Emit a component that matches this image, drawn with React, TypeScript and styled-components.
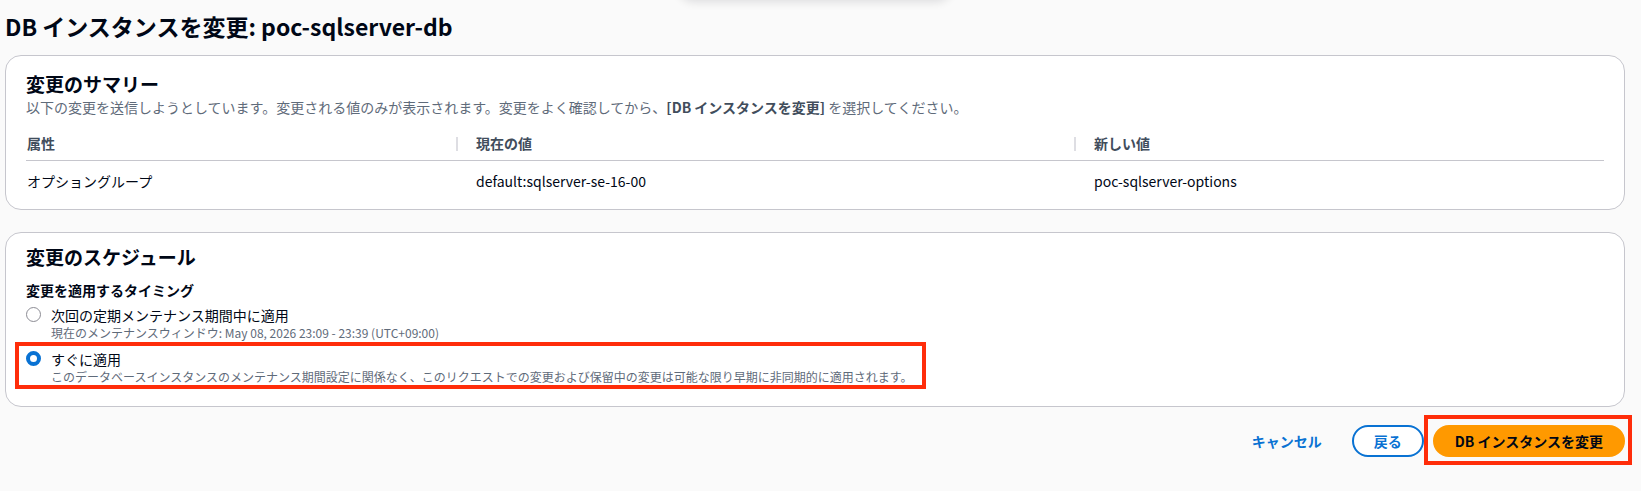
import styled, { createGlobalStyle } from 'styled-components';

const GlobalStyle = createGlobalStyle`
  body {
    margin: 0;
    background: #fafafa;
    font-family: "Noto Sans CJK JP", "Noto Sans", sans-serif;
    color: #000716;
  }
`;

const App = () => {
  return (
    <>
      <GlobalStyle />
      <StyledPage>
        <TopShadow />
        <PageTitle>DB インスタンスを変更: poc-sqlserver-db</PageTitle>

        <Card $padTop={16} $padBottom={8}>
          <CardTitle>変更のサマリー</CardTitle>
          <Description>
            以下の変更を送信しようとしています。変更される値のみが表示されます。変更をよく確認してから、
            <b>[DB インスタンスを変更]</b> を選択してください。
          </Description>
          <Table>
            <HeadCell>属性</HeadCell>
            <HeadCell $divider>現在の値</HeadCell>
            <HeadCell $divider>新しい値</HeadCell>
            <Cell>オプショングループ</Cell>
            <Cell $indent>default:sqlserver-se-16-00</Cell>
            <Cell $indent>poc-sqlserver-options</Cell>
          </Table>
        </Card>

        <Card $padTop={12} $padBottom={21} $gapAfter={18}>
          <CardTitle>変更のスケジュール</CardTitle>
          <FieldLabel>変更を適用するタイミング</FieldLabel>
          <RadioGroup>
            <RadioItem>
              <Radio />
              <RadioText>
                <RadioLabel>次回の定期メンテナンス期間中に適用</RadioLabel>
                <RadioHint>現在のメンテナンスウィンドウ: May 08, 2026 23:09 - 23:39 (UTC+09:00)</RadioHint>
              </RadioText>
            </RadioItem>
            <RadioItem $marked>
              <Radio $checked />
              <RadioText>
                <RadioLabel>すぐに適用</RadioLabel>
                <RadioHint>
                  このデータベースインスタンスのメンテナンス期間設定に関係なく、このリクエストでの変更および保留中の変更は可能な限り早期に非同期的に適用されます。
                </RadioHint>
              </RadioText>
            </RadioItem>
          </RadioGroup>
        </Card>

        <Actions>
          <LinkButton>キャンセル</LinkButton>
          <NormalButton>戻る</NormalButton>
          <Marked>
            <PrimaryButton>DB インスタンスを変更</PrimaryButton>
          </Marked>
        </Actions>
      </StyledPage>
    </>
  );
};

const StyledPage = styled.div`
  position: relative;
  padding: 11px 16px 20px 5px;
  display: flex;
  flex-direction: column;
`;

const TopShadow = styled.div`
  position: absolute;
  top: -40px;
  left: 678px;
  width: 274px;
  height: 40px;
  border-radius: 16px;
  background: #fafafa;
  box-shadow: 0 2px 10px rgba(0, 7, 22, 0.12);
`;

const PageTitle = styled.h1`
  margin: 0 0 14px 0;
  font-size: 23px;
  line-height: 30px;
  font-weight: 700;
  color: #000716;
`;

const Card = styled.section<{ $padTop: number; $padBottom: number; $gapAfter?: number }>`
  background: #fff;
  border: 1px solid #c6c6cd;
  border-radius: 16px;
  padding: ${(p) => p.$padTop}px 20px ${(p) => p.$padBottom}px 20px;
  margin-bottom: ${(p) => p.$gapAfter ?? 22}px;
`;

const CardTitle = styled.h2`
  margin: 0;
  font-size: 19px;
  line-height: 24px;
  font-weight: 700;
`;

const Description = styled.p`
  margin: 1px 0 0 0;
  font-size: 14px;
  line-height: 20px;
  color: #5f6b7a;

  b {
    color: #414d5c;
    font-weight: 700;
  }
`;

const Table = styled.div`
  margin-top: 8px;
  display: grid;
  grid-template-columns: 430px 618px 1fr;
`;

const HeadCell = styled.div<{ $divider?: boolean }>`
  position: relative;
  height: 35px;
  display: flex;
  align-items: center;
  padding-left: ${(p) => (p.$divider ? 20 : 1)}px;
  border-bottom: 1px solid #c6c6cd;
  font-size: 14px;
  font-weight: 700;
  color: #414d5c;

  &::before {
    content: '';
    display: ${(p) => (p.$divider ? 'block' : 'none')};
    position: absolute;
    left: 0;
    top: 12px;
    height: 14px;
    border-left: 2px solid #dedee3;
  }
`;

const Cell = styled.div<{ $indent?: boolean }>`
  height: 40px;
  display: flex;
  align-items: center;
  padding-left: ${(p) => (p.$indent ? 20 : 1)}px;
  font-size: 14px;
  color: #000716;
`;

const FieldLabel = styled.div`
  margin-top: 11px;
  font-size: 14px;
  line-height: 20px;
  font-weight: 700;
`;

const RadioGroup = styled.div`
  margin-top: 5px;
  display: flex;
  flex-direction: column;
  align-items: flex-start;
  gap: 8px;
`;

const RadioItem = styled.div<{ $marked?: boolean }>`
  position: relative;
  display: flex;
  align-items: flex-start;
  gap: 10px;

  &::after {
    content: '';
    display: ${(p) => (p.$marked ? 'block' : 'none')};
    position: absolute;
    left: -11px;
    top: -7px;
    right: -13px;
    bottom: -4px;
    border: 4px solid #ff2d0a;
    pointer-events: none;
  }
`;

const Radio = styled.span<{ $checked?: boolean }>`
  box-sizing: border-box;
  flex: none;
  width: 15px;
  height: 15px;
  margin-top: 2px;
  border-radius: 50%;
  background: #fff;
  border: ${(p) => (p.$checked ? '4.5px solid #0972d3' : '1.5px solid #8c8c94')};
`;

const RadioText = styled.div`
  display: flex;
  flex-direction: column;
`;

const RadioLabel = styled.span`
  font-size: 14px;
  line-height: 20px;
  color: #000716;
`;

const RadioHint = styled.span`
  font-size: 12px;
  line-height: 16px;
  color: #5f6b7a;
`;

const Actions = styled.div`
  display: flex;
  justify-content: flex-end;
  align-items: center;
  gap: 8px;
`;

const ButtonBase = styled.button`
  box-sizing: border-box;
  height: 32px;
  padding: 4px 20px;
  border-radius: 20px;
  border: 2px solid transparent;
  font-family: inherit;
  font-size: 14px;
  line-height: 20px;
  font-weight: 700;
  background: transparent;
  cursor: pointer;
`;

const LinkButton = styled(ButtonBase)`
  color: #0972d3;
`;

const NormalButton = styled(ButtonBase)`
  color: #0972d3;
  border-color: #0972d3;
  background: #fff;
`;

const PrimaryButton = styled(ButtonBase)`
  color: #000716;
  background: #ff9900;
  border-color: #ff9900;
`;

const Marked = styled.span`
  position: relative;
  display: inline-flex;
  margin-left: 1px;

  &::after {
    content: '';
    position: absolute;
    left: -9px;
    right: -7px;
    top: -10px;
    bottom: -8px;
    border: 4px solid #ff2d0a;
    pointer-events: none;
  }
`;

export default App;
